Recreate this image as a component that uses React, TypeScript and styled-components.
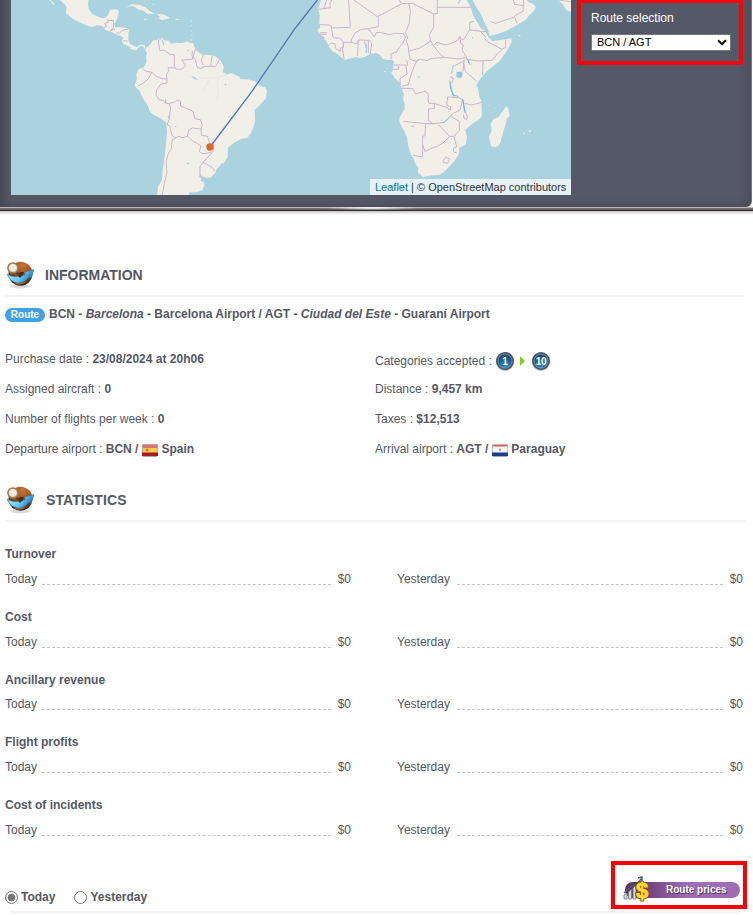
import React from "react";
import styled, { createGlobalStyle } from "styled-components";

const GlobalStyle = createGlobalStyle`
  * { box-sizing: border-box; }
  body {
    margin: 0;
    background: #fff;
    font: 12px/16px "Liberation Sans", Arial, sans-serif;
    color: #555863;
    overflow: hidden;
  }
`;

const Page = styled.div`
  width: 753px;
  height: 915px;
  overflow: hidden;
`;

const MapFrame = styled.section`
  height: 215px;
  background: linear-gradient(#aaa 0, #e8e8e8 3px, #fff 5px) 0 210px / 100% 5px no-repeat;
`;

const MapPanel = styled.div`
  display: flex;
  align-items: flex-start;
  height: 207px;
  width: 752px;
  padding-left: 11px;
  border-right: 1px solid #77767b;
  border-bottom-right-radius: 6px;
  background: linear-gradient(90deg, #454955 0, #555967 10px, #555967 738px, #4c505e 751px);
  box-shadow: inset 0 -7px 8px -6px #454854;
`;

const FrameEdge = styled.div`
  height: 4px;
  background:
    radial-gradient(ellipse 48px 2px at 372px 1px, #fff, transparent),
    linear-gradient(#b9b8ba 0 1px, #777477 1px 2px, #655f62 2px 3px, #353235 3px 4px);
`;

const MapView = styled.div`
  position: relative;
  width: 560px;
  height: 195px;
  background: #aad3df;
`;

const Attribution = styled.div`
  position: absolute;
  right: 0;
  bottom: 0;
  width: 201px;
  height: 16px;
  padding-left: 5px;
  font-size: 11px;
  line-height: 16px;
  color: #333;
  white-space: nowrap;
  background: rgba(255, 255, 255, 0.7);
  span { color: #0078a8; }
`;

const Highlight = styled.div<{ $kind: "route" | "prices" }>`
  border: 4px solid #f00;
  width: ${(p) => (p.$kind === "route" ? 166 : 136)}px;
  height: ${(p) => (p.$kind === "route" ? 66 : 48)}px;
  margin: ${(p) => (p.$kind === "route" ? "-1px 0 0 6px" : "0 6px 0 auto")};
  padding: ${(p) => (p.$kind === "route" ? "7px 0 0 10px" : "11px 0 0 8px")};
`;

const SelectLabel = styled.div`
  height: 24px;
  line-height: 16px;
  color: #fff;
`;

const SelectBox = styled.div`
  display: grid;
  align-items: center;
  width: 140px;
  height: 17px;
  > * { grid-area: 1 / 1; }
  svg { justify-self: end; margin-right: 4px; pointer-events: none; }
`;

const Select = styled.select`
  appearance: none;
  width: 140px;
  height: 17px;
  padding: 0 5px;
  border: 1px solid #767676;
  border-radius: 0;
  background: #fff;
  color: #000;
  font: 11px/15px "Liberation Sans", Arial, sans-serif;
`;

const SectionTitle = styled.h2<{ $spacing: number; $indent: number }>`
  display: flex;
  align-items: center;
  gap: ${(p) => p.$indent}px;
  width: 740px;
  height: 43px;
  margin: 0 0 0 5px;
  border-bottom: 2px solid #f3f3f3;
  font-size: 14px;
  letter-spacing: ${(p) => p.$spacing}px;
`;

const RouteLine = styled.div`
  display: flex;
  align-items: center;
  gap: 4px;
  height: 34px;
  padding-left: 5px;
  font-weight: bold;
  white-space: nowrap;
`;

const Badge = styled.span`
  width: 40px;
  height: 14px;
  margin-top: 2px;
  border-radius: 7px;
  background: #3ea2e5;
  color: #fff;
  font-size: 10px;
  line-height: 14px;
  text-align: center;
`;

const InfoGrid = styled.div`
  display: grid;
  grid-template-columns: 370px 370px;
  grid-auto-rows: 30px;
  padding: 13px 0 0 5px;
  height: 147px;
`;

const InfoCell = styled.div<{ $drop?: number }>`
  display: flex;
  align-items: center;
  padding-top: ${(p) => (p.$drop || 0) * 2}px;
  white-space: pre;
`;

const Gap = styled.span<{ $w: number }>`
  width: ${(p) => p.$w}px;
`;

const FlagSlot = styled.span<{ $right?: number }>`
  display: flex;
  margin: 3px ${(p) => p.$right ?? 3}px 0 4px;
`;

const StatList = styled.div`
  padding: 24px 10px 0 5px;
  height: 339px;
`;

const StatBlock = styled.div`
  height: 62.75px;
`;

const StatName = styled.div`
  height: 24.8px;
  font-weight: bold;
`;

const StatRow = styled.div`
  display: grid;
  grid-template-columns: 346px 346px;
  column-gap: 46px;
  height: 16px;
`;

const StatItem = styled.div`
  display: flex;
  align-items: flex-start;
`;

const Leader = styled.span<{ $left: number }>`
  flex: 1;
  height: 14px;
  margin: 0 7px 0 ${(p) => p.$left}px;
  border-bottom: 1px dashed #c3c5c7;
`;

const Footer = styled.div`
  display: flex;
  height: 50px;
`;

const Periods = styled.div`
  display: flex;
  gap: 19px;
  padding: 28px 0 0 5px;
  font-weight: bold;
`;

const Period = styled.div`
  display: flex;
  align-items: center;
  gap: 3px;
  height: 17px;
  line-height: 17px;
`;

const Radio = styled.span<{ $on?: boolean }>`
  width: 13px;
  height: 13px;
  border: 1px solid #767676;
  border-radius: 50%;
  background: ${(p) => (p.$on ? "radial-gradient(circle, #767676 3.5px, #fff 4.2px)" : "#fff")};
`;

const PricesButton = styled.div`
  display: flex;
  align-items: center;
  position: relative;
  width: 117px;
  height: 26px;
  svg { position: absolute; left: 0; top: 0; }
`;

const PricesPill = styled.div`
  width: 115px;
  height: 16px;
  margin: 1px 0 0 2px;
  padding-left: 41px;
  border-radius: 8px;
  background: linear-gradient(90deg, #572b62, #a06db5 55%);
  color: #fff;
  font: bold 10px/16px "Liberation Sans", Arial, sans-serif;
  text-shadow: 1px 1px 1px #4f2b5a;
  white-space: nowrap;
`;

const BottomRule = styled.div`
  width: 730px;
  height: 2px;
  margin-left: 10px;
  background: #f3f3f3;
`;

const InformationSection = styled.section`
  height: 264px;
  padding-top: 39px;
`;

function WorldMap() {
  return (
    <svg width="560" height="195" viewBox="33 0 1680 585">
      <g fill="#f2efe9">
        <path d="M180 0L193 12 200 22 197 38 212 52 235 65 262 77 276 81 292 76 306 78 317 91 334 96 347 102 360 107 371 113 365 122 370 132 382 137 391 141 391 147 405 151 411 151 413 144 421 139 430 139 435 151 441 158 438 168 440 186 430 203 417 207 409 222 411 237 404 254 409 263 419 273 428 294 442 314 449 333 458 343 484 356 499 368 501 396 496 454 492 483 488 510 486 540 475 558 471 585 567 585 568 577 590 577 607 570 613 556 612 546 602 543 604 536 597 529 600 524 617 534 633 532 646 518 650 506 668 493 683 472 684 443 702 428 724 417 742 414 755 396 765 365 764 329 777 318 798 294 801 272 796 262 780 259 764 243 741 238 722 238 718 230 696 220 680 222 667 216 672 201 661 180 645 168 628 165 607 164 588 151 582 139 580 129 568 128 562 124 546 129 530 128 514 131 506 122 492 121 487 111 470 120 459 121 451 133 441 143 433 135 419 134 412 141 400 137 391 132 385 120 385 103 387 88 379 84 362 82 346 81 342 72 351 58 357 34 350 28 331 29 325 43 317 53 306 55 291 49 278 43 266 27 264 10 266 0Z"/>
        <path d="M377 23L395 13 417 14 436 22 450 33 464 42 442 41 430 32 412 27 404 20 392 18ZM471 42L489 43 511 53 499 58 486 60 472 54 481 53ZM430 56L444 59 434 61ZM526 57L536 57 535 60 527 60ZM147 0L152 0 164 12 158 14 157 8Z"/>
        <path opacity=".55" d="M573 61h4v4h-4zM571 75h5v3h-5zM573 91h4v4h-4zM574 103h3v5h-3zM571 118h6v5h-6zM431 2h4v3h-4zM445 9h4v2h-4zM458 12h5v3h-5zM334 222h2v2h-2zM317 214h2v1h-2z"/>
        <g transform="translate(840 0)">
          <path d="M123 0L115 25 119 48 118 68 121 80 112 91 119 102 128 111 140 125 145 137 156 153 173 162 183 171 194 179 213 175 226 171 241 174 254 171 272 161 288 159 300 164 309 177 322 180 335 179 342 183 340 196 340 208 334 219 346 236 358 247 363 261 372 285 369 297 374 312 374 326 359 352 358 365 366 382 374 396 381 413 385 438 392 463 400 474 406 491 415 503 414 517 428 532 443 528 456 526 479 525 494 514 512 495 524 482 533 469 538 455 537 444 558 433 561 412 556 390 576 372 599 357 606 347 604 304 598 290 595 268 589 256 602 235 621 213 640 198 658 184 675 161 686 143 695 126 695 115 665 119 638 124 627 114 616 94 602 84 592 67 579 47 573 22 560 0Z"/>
          <path d="M578 0L589 22 603 43 612 65 621 82 627 98 629 108 655 101 680 92 701 81 720 70 739 58 748 45 762 32 768 20 757 11 744 5 740 0ZM834 0L848 12 859 31 873 36 873 0ZM680 318L684 325 689 348 681 355 678 369 669 398 661 428 654 438 645 442 633 438 627 410 635 391 632 372 640 358 655 351 666 337ZM730 398h5v4h-5zM746 391h6v4h-6zM714 106h7v3h-7zM313 213h4v3h-4z"/>
          <path opacity=".5" d="M627 316h4v3h-4zM642 323h3v3h-3zM321 205h3v4h-3z"/>
        </g>
      </g>
      <g fill="none" stroke="#c9b3c8" strokeWidth="2.9" strokeLinejoin="round">
        <path d="M310 83L320 79 314 70 324 68 322 61 340 61 340 81 332 94M332 91L345 88M349 98L358 100 365 92 385 87M369 122L383 123M435 149L438 138M487 112L475 122 479 151 493 151 508 162 523 165 523 199 528 208 547 207 557 197 545 180 577 178 586 147M577 153L576 169 586 178 592 203 603 205 614 199 647 199 658 179M610 165L604 181 609 195M636 168L632 197M525 204L504 203 507 212 500 222 501 248 482 253 470 270 468 285 477 299 491 302 495 309 508 311 526 305 533 300 541 304 542 318 580 334 584 356 601 359 607 373 603 389 605 406 622 409 631 434M427 206L436 213 456 217 468 228 486 236 501 237M456 217L445 236 427 251 414 258M508 311L512 323 507 360 501 374 510 379 511 391 517 407 527 414 535 409 549 413 562 409 566 391 577 384 603 387M562 409L573 419 603 438 598 455 609 461 625 459 639 455 640 430M497 309L497 298M527 414L516 421 514 446 504 463 498 485 501 516 493 550 487 585M636 458L609 487 600 500 600 526M609 487L637 502 644 512"/>
        <g transform="translate(840 0)">
          <path d="M156 0L150 8 151 23 116 28M140 0L134 18 134 28M206 0L211 82 157 84 149 75 119 74M222 0L292 50 343 23 366 11 386 11 391 31 388 70 376 98M358 0L364 10 374 11M386 11L397 10 461 42 472 41 472 0M472 22L574 22M461 42L461 82 448 104 452 123M295 50L295 80 265 86 244 88 224 100 214 120 213 127 190 127 181 115 159 113 154 82M119 98H140M117 103H140M119 109L132 112 131 118M145 137L154 129 165 131 166 145 181 154 181 145 190 142 190 127M190 127L188 150 192 176M213 127L230 131 235 120 269 121 275 131 271 162M235 120L232 169M254 123L258 144M265 123L265 160M265 86L283 111 288 98 301 97 329 104 343 100 370 101 377 110 369 129 357 143 350 156 333 162 333 177M377 100L384 114 378 120 384 138 386 153 390 178 409 184 421 178 440 182 455 175 490 173M386 153L418 145 453 123 460 137 483 165 492 172 535 177 554 173 563 178 595 183 613 182M460 137L470 127 498 135 519 128 532 121 540 110 542 130 550 136 546 149 562 177M536 110L550 120 569 90 569 67 583 63M569 90L600 93 618 112M614 116L622 125 666 148 677 142 677 119M666 148L635 181 609 182 608 225M416 178L409 184 397 213 390 235 385 254 365 259M342 195L383 195 380 180M342 208L355 208 355 198M378 196L381 222 360 236 361 255M362 265L398 266 407 282 435 274 445 281 444 300 447 310 463 310 463 325 446 327 445 362 459 371M463 310L504 324 511 331 512 320 500 317 503 291 536 293 548 299 540 330 517 342 495 367 459 371 429 370 371 364M517 342L512 349 538 364 538 391 522 409 509 409 475 374M521 198L550 184 556 214 590 244M511 230L520 234 517 246 510 251M548 299L554 330 562 349 560 359 552 355 550 344M554 310L576 315 604 307M459 371L436 372 435 407 428 409 428 471 399 466M509 409L488 430 470 440 454 445 435 455 429 437M522 409L530 441 521 444 520 455 531 459M489 482L498 471 509 478 502 490 491 488ZM631 65L647 70 700 52 710 44 729 34 731 0M700 0L704 13 729 17M704 52L710 68M553 178L549 213M604 94L618 95M834 0L872 5"/>
        </g>
      </g>
      <g stroke="#aad3df" strokeWidth="4" fill="none">
        <path d="M487 119L491 135M577 230L590 238M503 348L509 355M561 152h5M674 251L678 256M560 490h8M525 379h4M668 490L657 504"/>
        <path strokeWidth="1" opacity=".6" d="M590 238L620 234 657 231 686 222M556 222L589 238M654 235L652 263 657 281 647 304M627 239L609 275"/>
        <g transform="translate(840 0)">
          <path d="M259 133V160M520 197L514 221M564 178L570 195M534 11L541 0M550 300L554 335M511 250L520 289M492 366L510 350M394 379h8M576 113h3M414 231h4"/>
          <path d="M530 215h17v15l-6 4-12-2z" fill="#9accdf" stroke="none"/>
          <path d="M535 218l8 2-5 8" stroke="#70b4d7" strokeWidth="2"/>
          <path stroke="#5ba4cf" strokeWidth="2" d="M509 241L512 267 523 290M548 297L555 338M563 179L568 191M518 284L535 290"/>
        </g>
      </g>
      <path d="M952 0L883 88 756 274 630 441" fill="none" stroke="#5077b2" strokeWidth="4"/>
      <circle cx="630" cy="441" r="11" fill="#dd6927"/>
    </svg>
  );
}

function GlobeIcon() {
  return (
    <svg width="30" height="28" viewBox="0 0 30 28">
      <defs>
        <radialGradient id="globe" cx=".6" cy=".15" r=".85">
          <stop stopColor="#c97330" /><stop offset=".5" stopColor="#95501f" /><stop offset="1" stopColor="#3d2109" />
        </radialGradient>
        <linearGradient id="arrow" y2=".4"><stop stopColor="#2e8fc9"/><stop offset=".3" stopColor="#8fe1fa"/><stop offset=".65" stopColor="#65c5ef"/><stop offset="1" stopColor="#1777bd"/></linearGradient>
      </defs>
      <ellipse cx="15" cy="25.2" rx="10" ry="2.2" fill="#999" opacity=".35" />
      <circle cx="15.5" cy="12.7" r="12" fill="url(#globe)" />
      <path d="M9 22Q15 26 22 20L16 22Z" fill="#a5713b" />
      <path d="M2 13Q8 17 14 15L20 14 20 11 29 8.5 26 17 24 16Q20 22 13 22 5 21 2 13Z" fill="url(#arrow)" stroke="#2b7da8" strokeWidth=".6" />
      <path d="M13 15L15 11 19 11 18 14 15 17Z" fill="#572a0f" />
      <path d="M11 11L15 15" stroke="#493527" strokeWidth="1.7" />
      <circle cx="8" cy="7" r="5.1" fill="#d5d0bf" stroke="#a2764a" strokeWidth="1.5" />
      <circle cx="7.8" cy="6.4" r="3.5" fill="#efefe5" />
    </svg>
  );
}

function Category({ value }: { value: number }) {
  return (
    <svg width="20" height="20" viewBox="0 0 20 20">
      <defs><radialGradient id={"category" + value} cx=".5" cy=".75"><stop stopColor="#2a94d5"/><stop offset="1" stopColor="#1b5080"/></radialGradient></defs>
      <circle cx="10" cy="10.7" r="9.2" fill="#b9b9b9"/>
      <circle cx="10" cy="10" r="8.2" fill={`url(#category${value})`} stroke="#4c535b" strokeWidth="1.6"/>
      <circle cx="10" cy="10" r="7" fill="none" stroke="#8a9ca9" strokeWidth=".8"/>
      <text x="10" y="13.7" textAnchor="middle" fill="#fff" fontSize="10" fontWeight="bold" fontFamily="Liberation Sans" letterSpacing="-.3">{value}</text>
    </svg>
  );
}

function Flag({ country }: { country: "Spain" | "Paraguay" }) {
  const spain = country === "Spain";
  return (
    <svg width="16" height="13" viewBox="0 0 16 13">
      <path d="M1 12.5H15" stroke="#aaa"/>
      <path d="M.5 .5H15.5V11.5H.5Z" fill={spain ? "#f3ca52" : "#f4f4f4"} stroke={spain ? "#c7a09a" : "#c0c2c8"}/>
      <path d={spain ? "M1 1H15V4H1Z" : "M1 1H15V2.5H1Z"} fill={spain ? "#d77472" : "#e05c5c"}/>
      <path d="M0 8.5H16V12H0Z" fill={spain ? "#a71b22" : "#183f92"}/>
      {spain ? <circle cx="5" cy="6" r="1.5" fill="#c9803f"/> : <circle cx="8" cy="5.8" r="1.3" fill="#b4aaa5"/>}
    </svg>
  );
}

function PriceIcon() {
  return (
    <svg width="28" height="27" viewBox="0 0 28 27">
      <path d="M1 19L4 17V23H1ZM5.5 16L8.5 13V23H5.5ZM10 12L13 9V23H10ZM14.5 8L17.5 5V22H14.5Z" fill="#d6dade" stroke="#6c737e" strokeWidth=".8"/>
      <path d="M1 17L9 9 12 10 19 2M15 2L19 1V6" fill="none" stroke="#53606d" strokeWidth="1.4"/>
      <text x="13" y="22" fontFamily="Liberation Sans" fontSize="22" fontWeight="bold" fill="#eab51c" stroke="#765012" strokeWidth="2.6" paintOrder="stroke">$</text>
      <text x="13" y="21.5" fontFamily="Liberation Sans" fontSize="22" fontWeight="bold" fill="#ffda3d" stroke="#ffcf24" strokeWidth=".8">$</text>
    </svg>
  );
}

function Information() {
  return (
    <InformationSection>
      <SectionTitle $spacing={0} $indent={10}><GlobeIcon />INFORMATION</SectionTitle>
      <RouteLine>
        <Badge>Route</Badge>
        <span>BCN - <i>Barcelona</i> - Barcelona Airport / AGT - <i>Ciudad del Este</i> - Guaraní Airport</span>
      </RouteLine>
      <InfoGrid>
        <InfoCell>Purchase date : <b>23/08/2024 at 20h06</b></InfoCell>
        <InfoCell $drop={2}>
          Categories accepted : <Category value={1} /><Gap $w={5} />
          <svg width="6" height="10" viewBox="0 0 6 10"><path d="M0 0L5 5 0 10Z" fill="#8bcb27"/></svg>
          <Gap $w={5} /><Category value={10} />
        </InfoCell>
        <InfoCell>Assigned aircraft : <b>0</b></InfoCell>
        <InfoCell>Distance : <b>9,457 km</b></InfoCell>
        <InfoCell>Number of flights per week : <b>0</b></InfoCell>
        <InfoCell>Taxes : <b>$12,513</b></InfoCell>
        <InfoCell>Departure airport : <b>BCN /</b><FlagSlot><Flag country="Spain" /></FlagSlot><b>Spain</b></InfoCell>
        <InfoCell>Arrival airport : <b>AGT /</b><FlagSlot><Flag country="Paraguay" /></FlagSlot><b>Paraguay</b></InfoCell>
      </InfoGrid>
    </InformationSection>
  );
}

const statistics = ["Turnover", "Cost", "Ancillary revenue", "Flight profits", "Cost of incidents"];

export default function App() {
  return (
    <Page>
      <GlobalStyle />
      <MapFrame>
        <MapPanel>
          <MapView>
            <WorldMap />
            <Attribution><span>Leaflet</span> | © OpenStreetMap contributors</Attribution>
          </MapView>
          <Highlight $kind="route">
            <SelectLabel>Route selection</SelectLabel>
            <SelectBox>
              <Select><option>BCN / AGT</option></Select>
              <svg width="10" height="7" viewBox="0 0 10 7"><path d="M1 1.2L5 5.2 9 1.2" fill="none" stroke="#111" strokeWidth="2"/></svg>
            </SelectBox>
          </Highlight>
        </MapPanel>
        <FrameEdge />
      </MapFrame>
      <Information />
      <SectionTitle $spacing={0.1} $indent={11}><GlobeIcon />STATISTICS</SectionTitle>
      <StatList>
        {statistics.map((name) => (
          <StatBlock key={name}>
            <StatName>{name}</StatName>
            <StatRow>
              <StatItem>Today<Leader $left={5} />$0</StatItem>
              <StatItem>Yesterday<Leader $left={7} />$0</StatItem>
            </StatRow>
          </StatBlock>
        ))}
      </StatList>
      <Footer>
        <Periods>
          <Period><Radio $on />Today</Period>
          <Period><Radio />Yesterday</Period>
        </Periods>
        <Highlight $kind="prices">
          <PricesButton><PricesPill>Route prices</PricesPill><PriceIcon /></PricesButton>
        </Highlight>
      </Footer>
      <BottomRule />
    </Page>
  );
}
